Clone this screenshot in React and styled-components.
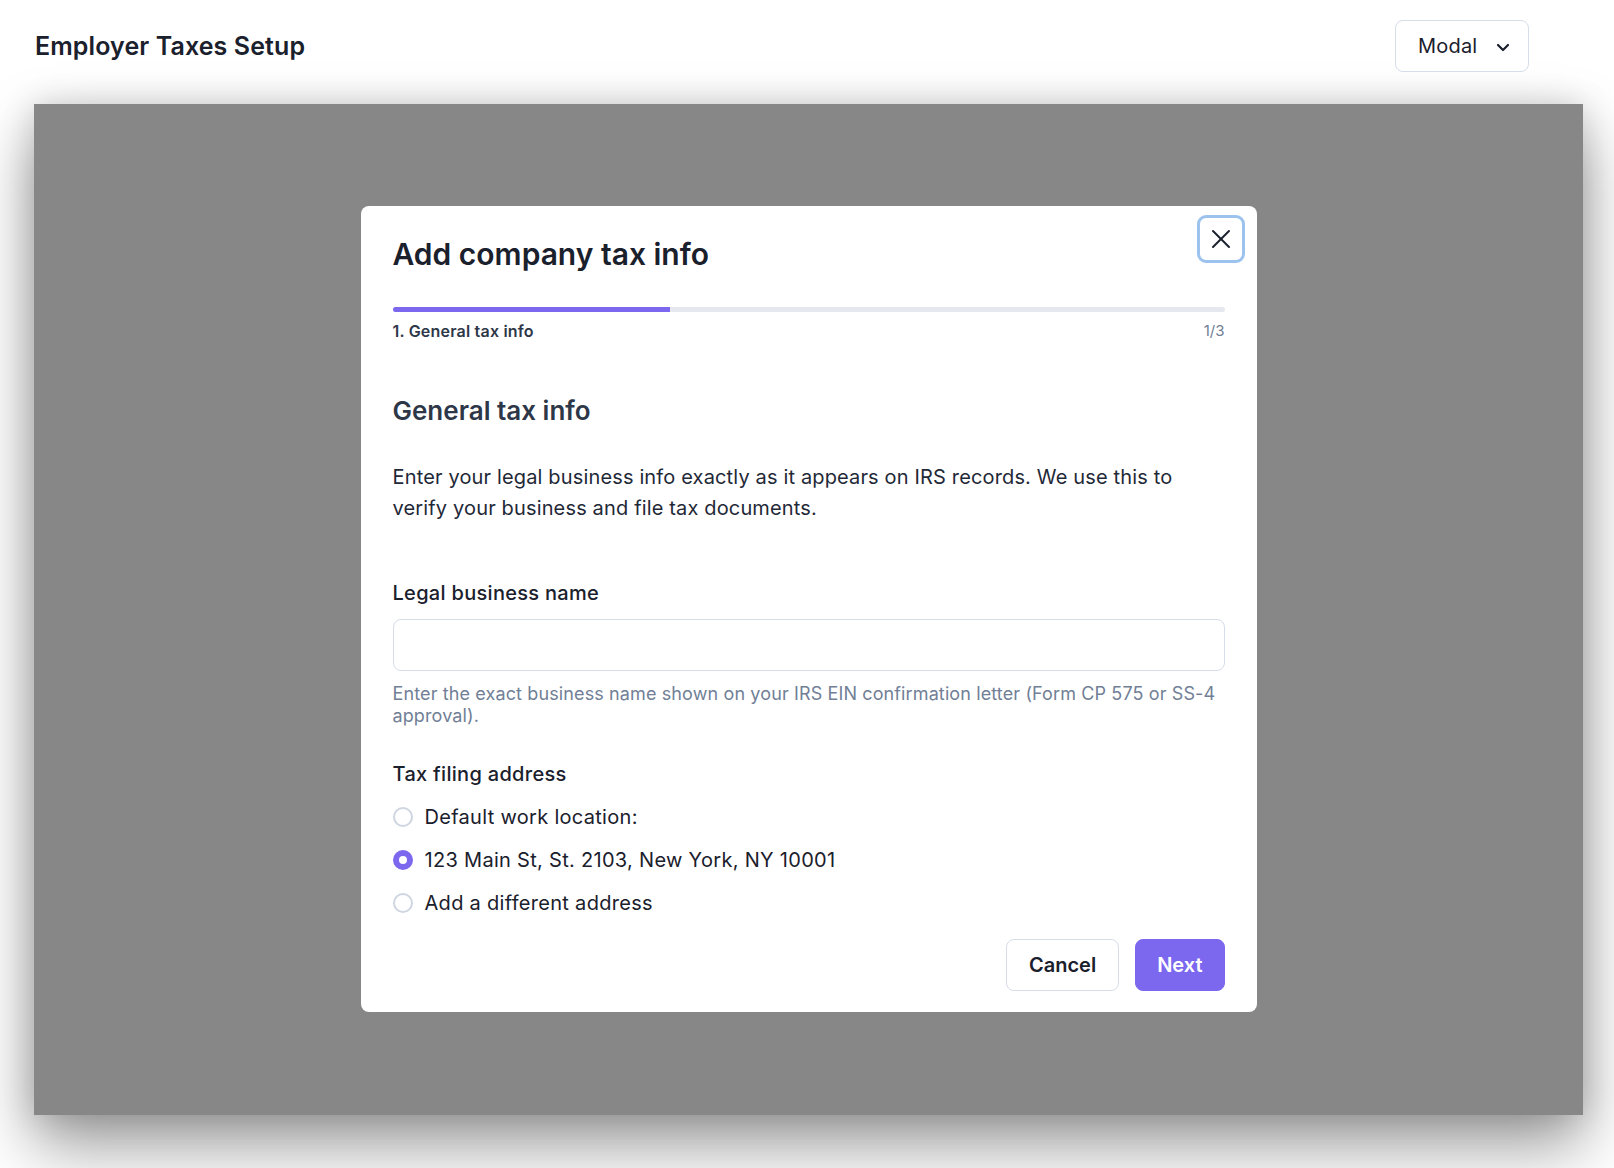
import React, { useState } from "react";
import styled, { createGlobalStyle } from "styled-components";
import { X } from "lucide-react";

const GlobalStyle = createGlobalStyle`
  * { box-sizing: border-box; }
  body {
    margin: 0;
    background: #ffffff;
    font-family: Inter, "Noto Sans", sans-serif;
    color: #1a202c;
  }
`;

const options = [
  { id: "default", label: "Default work location:" },
  { id: "main", label: "123 Main St, St. 2103, New York, NY 10001" },
  { id: "other", label: "Add a different address" },
];

const Chevron = () => (
  <svg width="14" height="9" viewBox="0 0 14 9" fill="none">
    <path d="M2 2l5 5 5-5" stroke="currentColor" strokeWidth="2.2" strokeLinecap="round" strokeLinejoin="round" />
  </svg>
);

const App = () => {
  const [selected, setSelected] = useState("main");

  return (
    <Page>
      <GlobalStyle />
      <Header>
        <PageTitle>Employer Taxes Setup</PageTitle>
        <ViewSelect>
          Modal
          <Chevron />
        </ViewSelect>
      </Header>
      <Preview>
        <Modal>
          <CloseButton aria-label="Close">
            <X size={32} strokeWidth={1.5} />
          </CloseButton>
          <ModalTitle>Add company tax info</ModalTitle>
          <Progress>
            <Fill style={{ width: `${(1 / 3) * 100}%` }} />
          </Progress>
          <StepRow>
            <StepName>1. General tax info</StepName>
            <StepCount>1/3</StepCount>
          </StepRow>

          <SectionTitle>General tax info</SectionTitle>
          <Intro>
            Enter your legal business info exactly as it appears on IRS records. We use this to
            verify your business and file tax documents.
          </Intro>

          <Field>
            <Label>Legal business name</Label>
            <Input type="text" />
            <Hint>
              Enter the exact business name shown on your IRS EIN confirmation letter (Form CP 575 or
              SS-4 approval).
            </Hint>
          </Field>

          <Group>
            <Label>Tax filing address</Label>
            <RadioList>
              {options.map((o) => (
                <RadioRow key={o.id} onClick={() => setSelected(o.id)}>
                  <RadioDot checked={selected === o.id} />
                  {o.label}
                </RadioRow>
              ))}
            </RadioList>
          </Group>

          <Actions>
            <Button>Cancel</Button>
            <Button primary>Next</Button>
          </Actions>
        </Modal>
      </Preview>
    </Page>
  );
};

export default App;

const Page = styled.div`
  padding: 0 31px 0 34px;
  height: 1168px;
  overflow: hidden;
`;

const Header = styled.header`
  display: flex;
  align-items: center;
  justify-content: space-between;
  height: 52px;
  margin-top: 20px;
  margin-bottom: 32px;
  padding-left: 1px;
  padding-right: 54px;
`;

const PageTitle = styled.h1`
  margin: 0;
  font-size: 25px;
  font-weight: 600;
  letter-spacing: 0.1px;
  color: #1a202c;
`;

const ViewSelect = styled.button`
  display: flex;
  align-items: center;
  justify-content: space-between;
  height: 52px;
  width: 134px;
  padding: 0 18px 0 22px;
  border: 1px solid #d6dde8;
  border-radius: 8px;
  background: #fff;
  font-family: inherit;
  font-size: 20px;
  letter-spacing: 0.2px;
  color: #1a202c;

  svg {
    flex-shrink: 0;
    margin-top: 2px;
  }
`;

const Preview = styled.div`
  height: 1011px;
  background: #878787;
  display: flex;
  justify-content: center;
  align-items: flex-start;
  padding-top: 102px;
  box-shadow: 0 30px 60px rgba(0, 0, 0, 0.4), 0 0 30px rgba(0, 0, 0, 0.15);
`;

const Modal = styled.div`
  position: relative;
  width: 896px;
  background: #fff;
  border-radius: 8px;
  padding: 30px 32px 21px;
`;

const CloseButton = styled.button`
  position: absolute;
  top: 9px;
  right: 12px;
  width: 48px;
  height: 48px;
  display: flex;
  align-items: center;
  justify-content: center;
  border: 3px solid #9cc3ee;
  border-radius: 9px;
  background: #fff;
  color: #1a202c;
  padding: 0;
`;

const ModalTitle = styled.h2`
  margin: 0;
  font-size: 30px;
  line-height: 36px;
  font-weight: 600;
  color: #1a202c;
`;

const Progress = styled.div`
  margin-top: 35px;
  height: 5px;
  border-radius: 3px;
  background: #e5e8ef;
  overflow: hidden;
`;

const Fill = styled.div`
  height: 100%;
  background: #7b68ee;
`;

const StepRow = styled.div`
  display: flex;
  justify-content: space-between;
  margin-top: 9px;
  font-size: 16px;
  line-height: 20px;
  letter-spacing: 0.2px;
`;

const StepName = styled.span`
  font-weight: 600;
  color: #2d3748;
`;

const StepCount = styled.span`
  color: #718096;
  font-size: 15px;
  letter-spacing: 0;
`;

const SectionTitle = styled.h3`
  margin: 54px 0 0;
  font-size: 26px;
  line-height: 32px;
  font-weight: 600;
  color: #2d3748;
`;

const Intro = styled.p`
  margin: 35px 0 0;
  font-size: 20px;
  line-height: 31px;
  letter-spacing: 0.15px;
  color: #1f2937;
`;

const Field = styled.div`
  margin-top: 56px;
  display: flex;
  flex-direction: column;
`;

const Label = styled.label`
  font-size: 20px;
  line-height: 26px;
  font-weight: 500;
  letter-spacing: 0.3px;
  color: #1a202c;
`;

const Input = styled.input`
  margin-top: 13px;
  height: 52px;
  border: 1px solid #d6dde8;
  border-radius: 8px;
  padding: 0 14px;
  font-family: inherit;
  font-size: 18px;
  outline: none;
`;

const Hint = styled.p`
  margin: 12px 0 0;
  font-size: 18px;
  line-height: 22px;
  letter-spacing: 0.12px;
  color: #718096;
`;

const Group = styled.div`
  margin-top: 34px;
  display: flex;
  flex-direction: column;
`;

const RadioList = styled.div`
  margin-top: 16px;
  display: flex;
  flex-direction: column;
  gap: 15px;
`;

const RadioRow = styled.div`
  display: flex;
  align-items: center;
  gap: 12px;
  height: 28px;
  font-size: 20px;
  letter-spacing: 0.3px;
  color: #1a202c;
  cursor: pointer;
`;

const RadioDot = styled.span`
  width: 20px;
  height: 20px;
  border-radius: 50%;
  flex-shrink: 0;
  border: ${(p) => (p.checked ? "6px solid #7b68ee" : "2px solid #cfd6e1")};
  background: #fff;
`;

const Actions = styled.div`
  display: flex;
  justify-content: flex-end;
  gap: 16px;
  margin-top: 22px;
`;

const Button = styled.button`
  height: 52px;
  padding: 0 ${(p) => (p.primary ? "21px" : "22px")};
  border-radius: 8px;
  border: 1px solid ${(p) => (p.primary ? "#7b68ee" : "#d6dde8")};
  background: ${(p) => (p.primary ? "#7b68ee" : "#fff")};
  color: ${(p) => (p.primary ? "#fff" : "#1a202c")};
  font-family: inherit;
  font-size: 20px;
  font-weight: 600;
  cursor: pointer;
`;
